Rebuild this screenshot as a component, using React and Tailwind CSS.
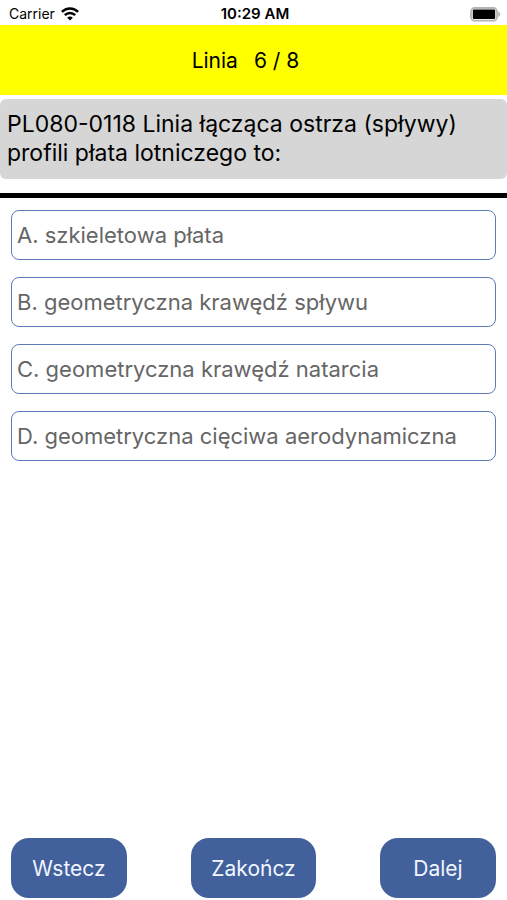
import { useState } from "react";

const question = {
  category: "Linia",
  number: 6,
  total: 8,
  text: "PL080-0118 Linia łącząca ostrza (spływy) profili płata lotniczego to:",
  answers: [
    "A. szkieletowa płata",
    "B. geometryczna krawędź spływu",
    "C. geometryczna krawędź natarcia",
    "D. geometryczna cięciwa aerodynamiczna",
  ],
};

function WifiIcon() {
  return (
    <svg className="w-[18px] h-[14px]" viewBox="0 0 18 14" fill="none" stroke="#000" strokeWidth="2.5" aria-hidden="true">
      <path d="M0.9 4.9C5.4 0.3 12.6 0.3 17.1 4.9" />
      <path d="M3.8 8.1C6.7 5.2 11.3 5.2 14.2 8.1" />
      <path d="M9 13.6L6.2 10.7C7.8 9.2 10.2 9.2 11.8 10.7Z" fill="#000" stroke="none" />
    </svg>
  );
}

function BatteryIcon() {
  return (
    <svg className="w-[31px] h-[15px]" viewBox="0 0 31 15" aria-hidden="true">
      <rect x="1" y="1" width="26" height="12.6" rx="3.6" fill="#fff" stroke="#b5b5b5" strokeWidth="1.8" />
      <rect x="2.8" y="2.6" width="22.4" height="9.4" rx="1.2" fill="#000" />
      <path d="M28.2 4.6C31 5.6 31 9 28.2 10Z" fill="#b5b5b5" />
    </svg>
  );
}

function StatusBar() {
  return (
    <div className="flex items-center h-[25px] pt-[3px] pl-[9px] pr-1.5 text-black">
      <div className="flex-1 flex items-center gap-1.5 text-sm">
        <span>Carrier</span>
        <WifiIcon />
      </div>
      <span className="text-[15px] leading-5 font-semibold">10:29 AM</span>
      <div className="flex-1 flex justify-end">
        <BatteryIcon />
      </div>
    </div>
  );
}

function NavButton({ children }) {
  return (
    <button type="button" className="min-w-[116px] h-[60px] px-5 pt-0.5 rounded-[18px] bg-[#41609c] text-[#f2f6ff] text-[21px]">
      {children}
    </button>
  );
}

function App() {
  const [selected, setSelected] = useState(null);

  return (
    <div className="min-h-screen flex flex-col bg-white font-['Inter','Liberation_Sans',sans-serif]">
      <StatusBar />

      {/* Category and progress */}
      <header className="flex items-center justify-center gap-4 h-[70px] pt-0.5 pr-4 bg-[#ffff00] text-[21px] text-black">
        <span>{question.category}</span>
        <span>{question.number} / {question.total}</span>
      </header>

      <h1 className="mt-1 px-[7px] py-[11px] rounded-md bg-[#d6d6d6] text-[23px] leading-[29px] text-black">
        {question.text}
      </h1>

      <hr className="mt-[14px] border-0 h-[5px] bg-black" />

      {/* Answers */}
      <main className="flex-1 flex flex-col gap-[17px] px-[11px] pt-3">
        {question.answers.map((answer, i) => (
          <button
            key={answer}
            type="button"
            aria-pressed={selected === i}
            onClick={() => setSelected(i)}
            className="min-h-[50px] px-[5px] rounded-lg border border-[#5f7bb5] text-left text-[22px] text-[#666666] aria-pressed:bg-blue-50"
          >
            {answer}
          </button>
        ))}
      </main>

      <footer className="flex justify-between px-[11px] pb-0.5">
        <NavButton>Wstecz</NavButton>
        <NavButton>Zakończ</NavButton>
        <NavButton>Dalej</NavButton>
      </footer>
    </div>
  );
}

export default App;
